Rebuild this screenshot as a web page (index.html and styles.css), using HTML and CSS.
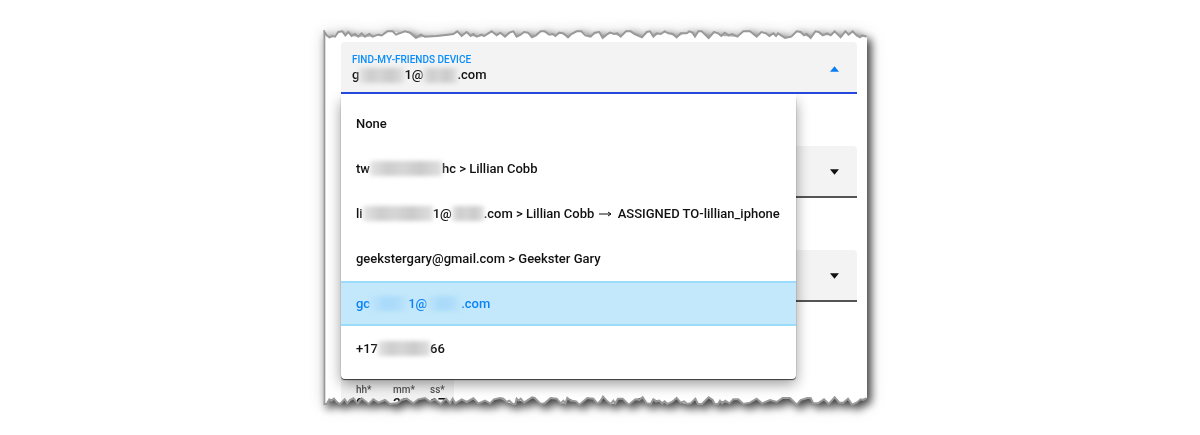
FILE: index.html
```html
<!DOCTYPE html>
<html lang="en">
<head>
<meta charset="utf-8">
<title>Find-My-Friends Device</title>
<link rel="stylesheet" href="styles.css">
</head>
<body>
<main class="paper">
  <svg class="defs" width="0" height="0" aria-hidden="true">
    <defs>
      <path id="edge-top" d="M4 1125V5L11 16L19 22L29 18L36 20L46 6L58 4L67 16L76 6L86 18L96 12L106 20L116 10L126 20L139 12L149 20L166 14L176 16L193 4L209 4L219 14L229 10L246 4L261 8L279 24L293 14L306 20L341 18L376 14L391 12L403 4L416 18L431 6L443 18L451 12L461 20L476 14L483 18L506 4L521 16L532 8L546 20L559 8L571 4L581 20L593 14L603 6L615 8L627 22L639 16L653 4L665 4L679 14L689 12L697 18L709 8L721 10L735 22L745 12L761 4L775 4L787 16L803 20L815 8L829 6L839 24L851 14L861 8L873 12L883 10L893 20L909 4L923 4L935 12L957 22L971 6L981 4L991 20L1001 10L1013 12L1025 4L1036 10L1049 12L1061 22L1073 10L1091 10L1099 4L1109 8L1116 20L1126 4L1136 4L1157 24L1173 6L1185 10L1195 18L1205 8L1217 16L1227 12L1243 20L1261 4L1281 4L1301 20L1315 6L1329 10L1339 18L1351 10L1359 18L1365 10L1386 24L1405 20L1421 4L1433 6L1443 16L1451 12L1463 24L1477 4L1487 6L1499 16L1513 10L1523 16L1535 4L1553 22L1567 4L1577 14L1589 4L1601 16L1611 22L1617 16L1631 20"/>
      <path id="edge-bottom" d="M4 1122L11 1122L19 1108L25 1112L33 1106L41 1116L51 1122L65 1108L73 1120L81 1110L91 1105L104 1120L116 1105L129 1115L137 1122L151 1108L166 1118L186 1110L201 1122L223 1120L236 1110L251 1106L271 1120L286 1108L306 1104L321 1115L336 1108L353 1122L369 1106L381 1120L389 1106L397 1120L416 1108L431 1116L451 1105L466 1120L486 1112L501 1120L513 1108L531 1104L541 1106L551 1116L559 1112L569 1122L577 1122L581 1106L587 1112L593 1106L603 1118L627 1102L635 1104L653 1122L665 1120L683 1104L701 1106L713 1120L721 1112L727 1120L733 1104L743 1112L759 1114L769 1124L793 1104L811 1106L823 1120L831 1116L840 1100L853 1114L863 1122L871 1112L877 1120L885 1106L899 1106L917 1124L937 1108L949 1110L959 1102L971 1120L983 1122L991 1108L999 1114L1009 1112L1017 1120L1025 1114L1033 1122L1047 1116L1061 1104L1073 1118L1083 1114L1093 1122L1103 1120L1117 1106L1125 1122L1137 1122L1157 1102L1169 1110L1175 1122L1185 1122L1191 1112L1197 1120L1207 1112L1219 1120L1231 1108L1246 1108L1261 1122L1281 1118L1301 1106L1317 1120L1341 1110L1361 1116L1379 1104L1401 1104L1421 1124L1433 1110L1453 1104L1463 1104L1471 1120L1485 1120L1503 1108L1517 1122L1535 1102L1549 1118L1561 1118L1575 1106L1587 1124L1601 1118L1613 1108L1621 1110L1631 1104"/>
      <clipPath id="torn">
        <path transform="scale(.33333)" d="M0 1122V5L11 16L19 22L29 18L46 6L58 4L67 16L76 6L86 18L106 20L126 20L149 20L166 14L193 4L209 4L229 10L246 4L261 8L279 24L306 20L341 18L391 12L403 4L416 18L431 6L443 18L461 20L483 18L506 4L521 16L532 8L546 20L571 4L581 20L603 6L615 8L627 22L653 4L665 4L697 18L709 8L735 22L761 4L775 4L803 20L829 6L839 24L861 8L893 20L909 4L923 4L957 22L981 4L991 20L1025 4L1061 22L1099 4L1116 20L1126 4L1136 4L1157 24L1173 6L1195 18L1243 20L1261 4L1281 4L1301 20L1315 6L1339 18L1365 10L1386 24L1405 20L1421 4L1463 24L1477 4L1499 16L1523 16L1535 4L1553 22L1567 4L1577 14L1589 4L1611 22L1632 20V1104L1613 1108L1601 1118L1587 1124L1575 1106L1561 1118L1549 1118L1535 1102L1517 1122L1503 1108L1485 1120L1471 1120L1463 1104L1453 1104L1433 1110L1421 1124L1401 1104L1379 1104L1361 1116L1341 1110L1317 1120L1301 1106L1281 1118L1261 1122L1246 1108L1231 1108L1219 1120L1191 1112L1185 1122L1175 1122L1169 1110L1157 1102L1137 1122L1125 1122L1117 1106L1103 1120L1093 1122L1073 1118L1061 1104L1047 1116L1033 1122L1009 1112L991 1108L983 1122L971 1120L959 1102L937 1108L917 1124L899 1106L885 1106L877 1120L863 1122L853 1114L840 1100L823 1120L811 1106L793 1104L769 1124L759 1114L733 1104L727 1120L713 1120L701 1106L683 1104L665 1120L653 1122L635 1104L627 1102L603 1118L581 1106L577 1122L569 1122L551 1116L531 1104L513 1108L501 1120L486 1112L466 1120L451 1105L431 1116L416 1108L397 1120L389 1106L381 1120L369 1106L353 1122L336 1108L321 1115L306 1104L286 1108L271 1120L251 1106L236 1110L223 1120L201 1122L186 1110L166 1118L151 1108L137 1122L116 1105L104 1120L91 1105L73 1120L65 1108L51 1122L33 1106L19 1108L11 1122Z"/>
      </clipPath>
    </defs>
  </svg>
  <form class="sheet">
    <div class="picker">
      <button class="field active" type="button" aria-haspopup="listbox" aria-expanded="true">
        <span class="text">
          <span class="label">FIND-MY-FRIENDS DEVICE</span>
          <span class="value">g<i class="mask w45"></i>1@<i class="mask w34"></i>.com</span>
        </span>
        <svg class="arrow" viewBox="0 0 10 6" aria-hidden="true"><path d="M5 0L10 6H0Z"/></svg>
      </button>
      <div class="menu" role="listbox" aria-label="Find-My-Friends Device">
        <button class="option" type="button" role="option">None</button>
        <button class="option" type="button" role="option">tw<i class="mask w72"></i>hc &gt; Lillian Cobb</button>
        <button class="option" type="button" role="option">li<i class="mask w70"></i>1@<i class="mask w32"></i>.com &gt; Lillian Cobb <svg class="to" viewBox="0 0 13 6" role="img" aria-label="to"><path d="M0 3H12M9 1L12 3L9 5"/></svg> ASSIGNED TO-lillian_iphone</button>
        <button class="option" type="button" role="option">geekstergary@gmail.com &gt; Geekster Gary</button>
        <button class="option selected" type="button" role="option" aria-selected="true">gc<i class="mask w38"></i>1@<i class="mask w34"></i>.com</button>
        <button class="option" type="button" role="option">+17<i class="mask w52"></i>66</button>
      </div>
    </div>
    <div class="select-wrap">
      <select class="field" aria-label="Second device"><option></option></select>
      <svg class="arrow" viewBox="0 0 10 6" aria-hidden="true"><path d="M0 0H10L5 6Z"/></svg>
    </div>
    <div class="select-wrap">
      <select class="field" aria-label="Third device"><option></option></select>
      <svg class="arrow" viewBox="0 0 10 6" aria-hidden="true"><path d="M0 0H10L5 6Z"/></svg>
    </div>
    <div class="time">
      <label>hh*<input type="text" value="0"></label>
      <label>mm*<input type="text" value="30"></label>
      <label>ss*<input type="text" value="17"></label>
    </div>
  </form>
  <svg class="edges" viewBox="0 0 1635 1140" aria-hidden="true">
    <use href="#edge-top"/><use href="#edge-bottom"/>
  </svg>
</main>
</body>
</html>
```
FILE: styles.css
```css
* { box-sizing: border-box; }

body {
  margin: 0;
  padding: 30px 25px 24px 16px;
  background: #fff;
  color: #111;
  font: 500 13px/20px Roboto, sans-serif;
}

button, input, select { font: inherit; color: inherit; }

.paper {
  position: relative;
  width: 100%;
  max-width: 545px;
  margin: 0 auto;
  filter: drop-shadow(4px 4px 4px rgba(0, 0, 0, .7)) drop-shadow(0 0 7px rgba(0, 0, 0, .16));
}

.defs { position: absolute; }

.sheet {
  display: flex;
  flex-direction: column;
  gap: 52px;
  height: 375px;
  padding: 12px 11px 0 18px;
  background: #fff;
  clip-path: url(#torn);
}

.edges {
  position: absolute;
  top: 0;
  left: 0;
  width: 545px;
  height: 380px;
  fill: none;
  stroke: #999;
  stroke-width: 6;
  pointer-events: none;
}

.picker { position: relative; z-index: 1; }

.field {
  display: flex;
  align-items: center;
  justify-content: space-between;
  width: 100%;
  height: 52px;
  margin: 0;
  padding: 5px 18px 2px 11px;
  border: 0;
  border-bottom: 2px solid #555;
  border-radius: 4px 4px 0 0;
  background: #f3f3f3;
  text-align: left;
  appearance: none;
}

.field.active {
  position: relative;
  z-index: 1;
  border-bottom: 2px solid #2448dc;
}

.text { display: flex; flex-direction: column; }

.label { color: #0a8dfa; font-size: 10px; line-height: 12px; }

.value { line-height: 18px; }

.arrow { width: 9px; height: 6px; fill: #111; }

.active .arrow { fill: #0a7cf5; }

.select-wrap { position: relative; }

.select-wrap .arrow { position: absolute; top: 23px; right: 18px; }

.menu {
  position: absolute;
  top: 55px;
  left: 0;
  width: 455px;
  max-width: 100%;
  padding: 4px 0 8px;
  border-radius: 0 0 4px 4px;
  background: #fff;
  box-shadow: 0 1px 1px rgba(0, 0, 0, .7), 0 5px 14px rgba(0, 0, 0, .4);
}

.menu::before {
  content: "";
  position: absolute;
  top: -3px;
  left: 0;
  right: 0;
  height: 3px;
  background: #fff;
}

.option {
  display: flex;
  align-items: center;
  width: 100%;
  height: 45px;
  padding: 0 15px;
  border: 0;
  background: none;
  white-space: pre;
}

.option.selected {
  border-top: 2px solid #9bdcfa;
  border-bottom: 2px solid #9bdcfa;
  background: #c3e8fb;
  color: #0a82f5;
}

.mask {
  display: inline-block;
  flex: none;
  height: 15px;
  background: linear-gradient(90deg, #e4e4e4, #cdcdcd 25%, #d6d6d6 45%, #cacaca 70%, #e0e0e0);
  filter: blur(2px);
  vertical-align: -4px;
}

.selected .mask { background: linear-gradient(90deg, #bfe5fb, #a9dafa 40%, #addcfa 70%, #bfe5fb); }

.w32 { width: 32px; }
.w34 { width: 34px; }
.w38 { width: 38px; }
.w45 { width: 45px; }
.w52 { width: 52px; }
.w70 { width: 70px; }
.w72 { width: 72px; }

.to { flex: none; width: 13px; height: 6px; margin: 0 2px; fill: none; stroke: #111; }

.time {
  display: flex;
  flex: none;
  align-items: flex-end;
  gap: 19px;
  width: 113px;
  height: 58px;
  padding: 0 7px 0 15px;
  background: #f3f3f3;
}

.time label {
  display: flex;
  flex-direction: column;
  width: 18px;
  color: #555;
  font-size: 10px;
  line-height: 12px;
}

.time input {
  width: 18px;
  height: 16px;
  padding: 0;
  border: 0;
  background: none;
  color: #111;
  font-size: 14px;
}
```
